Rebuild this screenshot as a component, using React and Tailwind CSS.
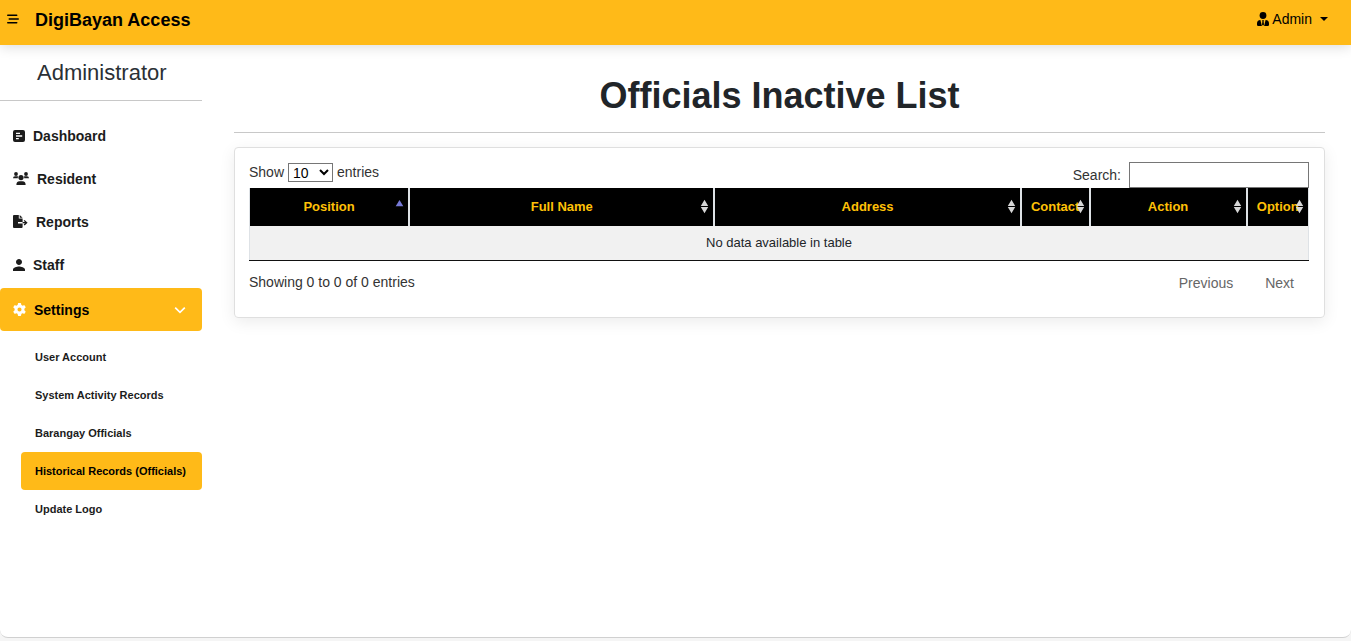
import React from "react";
import { FaBarsStaggered, FaGear } from "react-icons/fa6";

function DashboardIcon({ className }) {
  return (
    <svg viewBox="0 0 12 12" aria-hidden="true" className={className} fill="currentColor">
      <path
        fillRule="evenodd"
        d="M2 0H10Q12 0 12 2V10Q12 12 10 12H2Q0 12 0 10V2Q0 0 2 0ZM3 2.7V4.1H7V2.7ZM3 5.3V6.7H9.2V5.3ZM3 7.9V9.3H5.8V7.9Z"
      />
    </svg>
  );
}

function ResidentIcon({ className }) {
  return (
    <svg viewBox="0 0 16 13" aria-hidden="true" className={className} fill="currentColor">
      <circle cx="3" cy="2" r="1.9" />
      <circle cx="13" cy="2" r="1.9" />
      <path d="M0 6.3Q0 4.3 2 4.3H4.2Q4.8 4.3 5.1 4.6 4.6 5.5 4.8 6.3ZM16 6.3Q16 4.3 14 4.3H11.8Q11.2 4.3 10.9 4.6 11.4 5.5 11.2 6.3Z" />
      <circle cx="8" cy="5.6" r="2.6" />
      <path d="M3.4 13Q3.2 9.2 6.6 9.2H9.4Q12.8 9.2 12.6 13Z" />
    </svg>
  );
}

function ReportsIcon({ className }) {
  return (
    <svg viewBox="0 0 15 13" aria-hidden="true" className={className} fill="currentColor">
      <path d="M0 1Q0 0 1 0H5.8V3.6H9.6V7H5V8.4H9.6V12Q9.6 13 8.6 13H1Q0 13 0 12Z" />
      <path d="M6.7 0 9.6 2.8H6.7Z" />
      <path d="M9.6 7.1H12L10.7 5.8 11.6 4.9 14.6 7.7 11.6 10.5 10.7 9.6 12 8.3H9.6Z" />
    </svg>
  );
}

function PersonIcon({ className }) {
  return (
    <svg viewBox="4 4 16 16" aria-hidden="true" className={className} fill="currentColor">
      <path d="M12 12c2.21 0 4-1.79 4-4s-1.79-4-4-4-4 1.79-4 4 1.79 4 4 4zm0 2c-2.67 0-8 1.34-8 4v2h16v-2c0-2.66-5.33-4-8-4z" />
    </svg>
  );
}

function AdminIcon({ className }) {
  return (
    <svg viewBox="0 0 12 14" aria-hidden="true" className={className} fill="currentColor">
      <circle cx="6" cy="3.5" r="3.4" />
      <path d="M3.4 8 4.9 14H1.2Q0 14 0 12.8V11.4Q0 8.4 3.4 8ZM8.6 8 7.1 14H10.8Q12 14 12 12.8V11.4Q12 8.4 8.6 8ZM5 8.2H7L6.6 9.6 7 12.6 6 13.8 5 12.6 5.4 9.6Z" />
    </svg>
  );
}

const navItems = [
  { label: "Dashboard", icon: DashboardIcon, size: "h-3 w-3" },
  { label: "Resident", icon: ResidentIcon, size: "h-[13px] w-4" },
  { label: "Reports", icon: ReportsIcon, size: "h-[13px] w-[15px]" },
  { label: "Staff", icon: PersonIcon, size: "h-3 w-3" },
];

const subItems = [
  { label: "User Account" },
  { label: "System Activity Records" },
  { label: "Barangay Officials" },
  { label: "Historical Records (Officials)", active: true },
  { label: "Update Logo" },
];

const columns = [
  { label: "Position", width: "w-[15.2%]", sorted: true },
  { label: "Full Name", width: "w-[28.8%]" },
  { label: "Address", width: "w-[28.9%]" },
  { label: "Contact", width: "w-[6.5%]" },
  { label: "Action", width: "w-[14.8%]" },
  { label: "Option", width: "w-[5.8%]" },
];

function SortIcon({ sorted }) {
  return (
    <svg
      viewBox="0 0 9 15"
      aria-hidden="true"
      className="absolute right-1 top-[11px] h-[15px] w-[9px]"
    >
      {sorted ? (
        <path d="M4.5 1 8.3 7.2H.7Z" fill="#7679d6" />
      ) : (
        <path d="M4.5 0.8 8.2 7H.8ZM4.5 14.2 8.2 8H.8Z" fill="#d6d6d6" />
      )}
    </svg>
  );
}

function Header() {
  return (
    <header className="relative flex h-[45px] items-center bg-[#ffba18] pb-2 pl-[7px] pr-[23px] text-black shadow-[0_2px_12px_rgba(0,0,0,0.14)]">
      <button type="button" aria-label="Toggle menu">
        <FaBarsStaggered className="h-3 w-3" />
      </button>
      <a href="#home" className="ml-4 pt-0.5 text-lg font-bold">
        DigiBayan Access
      </a>
      <button type="button" className="ml-auto flex items-center gap-[3px] text-sm">
        <AdminIcon className="h-[14px] w-3" />
        Admin
        <svg viewBox="0 0 8 4" aria-hidden="true" className="ml-[5px] h-1 w-2">
          <path d="M0 0h8L4 4Z" fill="currentColor" />
        </svg>
      </button>
    </header>
  );
}

function Sidebar() {
  return (
    <aside className="w-[202px] shrink-0">
      <h2 className="h-14 border-b border-[#c8c8c8] pl-[37px] pt-3 text-[22px] leading-8 text-[#2b3035]">
        Administrator
      </h2>
      <nav className="mt-[13px] text-[#1c1c1c]">
        <div className="pb-0.5">
          {navItems.map(({ label, icon: Icon, size }) => (
            <a
              key={label}
              href={`#${label.toLowerCase()}`}
              className="flex h-[43px] items-center gap-2 pl-[13px] text-sm font-bold"
            >
              <Icon className={size} />
              {label}
            </a>
          ))}
        </div>
        <button
          type="button"
          aria-expanded="true"
          className="flex h-[43px] w-full items-center gap-2 rounded bg-[#ffba18] pl-[13px] pr-4 text-sm font-bold text-black"
        >
          <FaGear className="h-[13px] w-[13px] text-white" />
          Settings
          <svg
            viewBox="0 0 12 12"
            aria-hidden="true"
            className="ml-auto h-3 w-3 text-white"
            fill="none"
            stroke="currentColor"
            strokeWidth="1.7"
          >
            <path d="M1.2 3.6 6 8.4 10.8 3.6" />
          </svg>
        </button>
        <div className="mt-[7px] pl-[21px]">
          {subItems.map(({ label, active }) => (
            <a
              key={label}
              href="#settings"
              aria-current={active ? "page" : undefined}
              className={
                active
                  ? "flex h-[38px] items-center whitespace-nowrap rounded bg-[#ffba18] pl-[14px] text-[11px] font-bold text-black"
                  : "flex h-[38px] items-center whitespace-nowrap pl-[14px] text-[11px] font-bold"
              }
            >
              {label}
            </a>
          ))}
        </div>
      </nav>
    </aside>
  );
}

function OfficialsTable() {
  return (
    <table className="w-full table-fixed border-separate border-spacing-0 border-b border-[#111] text-[13px]">
      <thead>
        <tr>
          {columns.map(({ label, width, sorted }, i) => (
            <th
              key={label}
              scope="col"
              aria-sort={sorted ? "ascending" : undefined}
              className={`relative h-[38px] border-[#dee2e6] bg-black bg-clip-padding px-0 font-bold text-[#ffc107] ${width} ${
                i === 0
                  ? "border-x border-r-2"
                  : i === columns.length - 1
                    ? "border-r"
                    : "border-r-2"
              }`}
            >
              <button type="button">{label}</button>
              <SortIcon sorted={sorted} />
            </th>
          ))}
        </tr>
      </thead>
      <tbody>
        <tr>
          <td
            colSpan={columns.length}
            className="h-[34px] border-x border-[#dee2e6] bg-[#f1f1f1] text-center text-[#212529]"
          >
            No data available in table
          </td>
        </tr>
      </tbody>
    </table>
  );
}

export default function App() {
  return (
    <div className="min-h-screen bg-[#f5f5f5] pb-[3px] font-['Liberation_Sans',Arial,sans-serif]">
      <div className="min-h-[calc(100vh-3px)] rounded-b-lg border-b border-[#d0d0d0] bg-white">
        <Header />
        <div className="flex">
          <Sidebar />
          <main className="ml-8 mr-[26px] min-w-0 flex-1">
            <h1 className="border-b border-[#c8c8c8] pb-[13px] pt-[27px] text-center text-4xl font-bold leading-[47px] text-[#212529]">
              Officials Inactive List
            </h1>
            <section className="mt-[14px] rounded border border-[#dfdfdf] pb-4 pl-[14px] pr-[15px] pt-[14px] text-sm text-[#333] shadow-[0_4px_16px_rgba(0,0,0,0.08)]">
              <div className="flex items-start justify-between">
                <label className="flex items-center gap-1">
                  Show
                  <select className="h-[19px] w-[45px] border border-[#767676] bg-white text-sm leading-4 text-black">
                    <option>10</option>
                    <option>25</option>
                    <option>50</option>
                    <option>100</option>
                  </select>
                  entries
                </label>
                <label className="flex items-center gap-2">
                  Search:
                  <input
                    type="search"
                    className="h-[26px] w-[180px] border border-[#767676] bg-white px-1 text-black"
                  />
                </label>
              </div>
              <OfficialsTable />
              <div className="flex items-start justify-between">
                <p className="pt-[11px]">Showing 0 to 0 of 0 entries</p>
                <div className="flex gap-[2px] pt-1 text-[#666]">
                  <button type="button" disabled className="px-[15px] py-2">
                    Previous
                  </button>
                  <button type="button" disabled className="px-[15px] py-2">
                    Next
                  </button>
                </div>
              </div>
            </section>
          </main>
        </div>
      </div>
    </div>
  );
}
